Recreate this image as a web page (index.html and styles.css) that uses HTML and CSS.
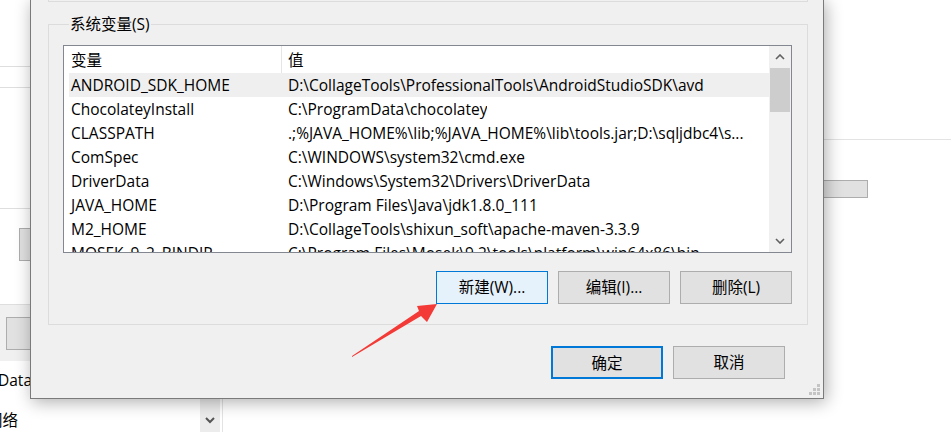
FILE: index.html
```html
<!DOCTYPE html>
<html lang="zh-CN">
<head>
<meta charset="utf-8">
<title>环境变量</title>
<link rel="stylesheet" href="styles.css">
</head>
<body>
<div class="desk">
  <div class="back-left">
    <div class="bl-top"></div>
    <div class="bl-row"></div>
    <div class="bl-mid"></div>
    <div class="bl-sec"><div class="ghost-btn gb1"></div></div>
    <div class="bl-grey"><div class="ghost-btn gb2"></div></div>
    <div class="bl-item bl-data">Data</div>
    <div class="bl-item bl-net">
      <span class="bl-net-text">网络</span>
      <span class="bl-drop">
        <svg width="10" height="7" viewBox="0 0 10 7"><polyline points="1,1 5,5 9,1" fill="none" stroke="#555" stroke-width="2"/></svg>
      </span>
    </div>
  </div>
  <div class="back-right">
    <div class="br-top"></div>
    <div class="ghost-btn gb3"></div>
  </div>

  <div class="dialog">
    <div class="prev-group"></div>
    <div class="group">
      <div class="group-label">系统变量(S)</div>
      <div class="listbox">
        <div class="list-content">
          <div class="list-head">
            <div class="c1 head-c1">变量</div>
            <div class="c2">值</div>
          </div>
          <div class="row selected"><div class="c1">ANDROID_SDK_HOME</div><div class="c2">D:\CollageTools\ProfessionalTools\AndroidStudioSDK\avd</div></div>
          <div class="row"><div class="c1">ChocolateyInstall</div><div class="c2">C:\ProgramData\chocolatey</div></div>
          <div class="row"><div class="c1">CLASSPATH</div><div class="c2">.;%JAVA_HOME%\lib;%JAVA_HOME%\lib\tools.jar;D:\sqljdbc4\s...</div></div>
          <div class="row"><div class="c1">ComSpec</div><div class="c2">C:\WINDOWS\system32\cmd.exe</div></div>
          <div class="row"><div class="c1">DriverData</div><div class="c2">C:\Windows\System32\Drivers\DriverData</div></div>
          <div class="row"><div class="c1">JAVA_HOME</div><div class="c2">D:\Program Files\Java\jdk1.8.0_111</div></div>
          <div class="row"><div class="c1">M2_HOME</div><div class="c2">D:\CollageTools\shixun_soft\apache-maven-3.3.9</div></div>
          <div class="row"><div class="c1">MOSEK_9_2_BINDIR</div><div class="c2">C:\Program Files\Mosek\9.2\tools\platform\win64x86\bin</div></div>
        </div>
        <div class="scrollbar">
          <div class="sb-btn">
            <svg width="10" height="6" viewBox="0 0 10 6"><polyline points="1,5 5,1 9,5" fill="none" stroke="#606060" stroke-width="1.6"/></svg>
          </div>
          <div class="sb-track"><div class="sb-thumb"></div></div>
          <div class="sb-btn">
            <svg width="10" height="6" viewBox="0 0 10 6"><polyline points="1,1 5,5 9,1" fill="none" stroke="#606060" stroke-width="1.6"/></svg>
          </div>
        </div>
      </div>
      <div class="btn-row">
        <button class="btn hover">新建(W)...</button>
        <button class="btn">编辑(I)...</button>
        <button class="btn">删除(L)</button>
      </div>
    </div>
    <div class="btn-row bottom-row">
      <button class="btn default">确定</button>
      <button class="btn">取消</button>
    </div>
    <svg class="grip" width="12" height="12" viewBox="0 0 12 12">
      <rect x="8" y="0" width="3" height="3" fill="#c4c4c4"/>
      <rect x="4" y="4" width="3" height="3" fill="#c4c4c4"/>
      <rect x="8" y="4" width="3" height="3" fill="#c4c4c4"/>
      <rect x="0" y="8" width="3" height="3" fill="#c4c4c4"/>
      <rect x="4" y="8" width="3" height="3" fill="#c4c4c4"/>
      <rect x="8" y="8" width="3" height="3" fill="#c4c4c4"/>
    </svg>
  </div>

  <svg class="arrow" width="951" height="432" viewBox="0 0 951 432">
    <polygon points="352,357 421,316 427,322 437,304 417,306 419,311 352,356" fill="#f33a36"/>
  </svg>
</div>
</body>
</html>
```
FILE: styles.css
```css
* { box-sizing: border-box; }
html, body { margin: 0; padding: 0; background: #fff; }
body {
  font-family: "Open Sans", "Noto Sans CJK SC", sans-serif;
  font-size: 15.5px;
  color: #000;
}
.desk {
  position: relative;
  width: 951px;
  height: 432px;
  overflow: hidden;
  display: flex;
  justify-content: space-between;
  align-items: flex-start;
}

/* window behind */
.back-left {
  width: 223px;
  height: 432px;
  border-right: 1px solid #e3e3e3;
  display: flex;
  flex-direction: column;
}
.back-left > * { flex: none; }
.bl-top { height: 66px; }
.bl-row { height: 21px; border-top: 1px solid #dedede; }
.bl-mid { height: 121px; border-top: 1px solid #dedede; }
.bl-sec { height: 96px; border-top: 1px solid #dedede; padding: 19px 0 0 19px; }
.bl-grey { height: 57px; border-top: 1px solid #dedede; background: #f0f0f0; padding: 12px 0 0 6px; }
.ghost-btn { background: #e1e1e1; border: 1px solid #adadad; }
.gb1 { width: 100px; height: 33px; }
.gb2 { width: 100px; height: 33px; }
.bl-item { white-space: nowrap; }
.bl-data { height: 38px; line-height: 38px; margin-left: -2px; }
.bl-net { height: 34px; display: flex; }
.bl-net-text { width: 200px; margin-left: -13px; padding-top: 10px; line-height: 22px; }
.bl-drop {
  width: 20px;
  margin-left: 13px;
  background: #ececec;
  display: flex;
  justify-content: center;
  padding-top: 18px;
}
.back-right {
  width: 128px;
  display: flex;
  flex-direction: column;
  align-items: flex-end;
}
.br-top { width: 100%; height: 140px; border-bottom: 1px solid #e3e3e3; }
.gb3 { width: 130px; height: 18px; margin-top: 40px; margin-right: 83px; }

/* dialog */
.dialog {
  position: absolute;
  left: 30px;
  top: -1px;
  width: 794px;
  height: 400px;
  background: #f0f0f0;
  border: 1px solid #7a7a7a;
  box-shadow: 2px 3px 16px rgba(0, 0, 0, 0.32);
  padding: 0 15px 19px 17px;
  display: flex;
  flex-direction: column;
}
.prev-group {
  height: 2px;
  border: 1px solid #dcdcdc;
  border-top: none;
}
.group {
  margin-top: 22px;
  border: 1px solid #dcdcdc;
  padding: 0 15px 20px 14px;
}
.group-label {
  width: fit-content;
  margin: -11px 0 0 6px;
  padding: 0 1px;
  background: #f0f0f0;
  line-height: 20px;
  white-space: nowrap;
}
.listbox {
  margin-top: 11px;
  height: 208px;
  border: 1px solid #828790;
  background: #fff;
  display: flex;
}
.list-content {
  flex: 1;
  overflow: hidden;
  padding-left: 5px;
}
.list-head {
  height: 27px;
  display: flex;
}
.list-head .c1, .list-head .c2 { padding-top: 2px; line-height: 25px; }
.row {
  height: 24px;
  line-height: 24px;
  display: flex;
}
.row.selected { background: #efefef; }
.c1 {
  width: 213px;
  flex: none;
  padding-left: 2px;
  white-space: nowrap;
  overflow: hidden;
}
.head-c1 { border-right: 1px solid #e5e5e5; }
.c2 {
  padding-left: 6px;
  white-space: nowrap;
  overflow: hidden;
}
.scrollbar {
  width: 22px;
  flex: none;
  background: #f0f0f0;
  display: flex;
  flex-direction: column;
}
.sb-btn {
  height: 22px;
  display: flex;
  align-items: center;
  justify-content: center;
}
.sb-track { flex: 1; padding: 0 1px; }
.sb-thumb { height: 44px; background: #cdcdcd; }

.btn-row {
  display: flex;
  justify-content: flex-end;
  gap: 10px;
  margin-top: 18px;
}
.bottom-row { margin-top: 21px; margin-right: 23px; }
.btn {
  width: 112px;
  height: 33px;
  background: #e1e1e1;
  border: 1px solid #adadad;
  font: inherit;
  color: #000;
  padding: 0;
  line-height: 31px;
}
.btn.hover { background: #e5f1fb; border-color: #0078d7; }
.btn.default { border: 2px solid #0078d7; }
.grip {
  position: absolute;
  right: 2px;
  bottom: 2px;
}
.arrow {
  position: absolute;
  left: 0;
  top: 0;
  pointer-events: none;
}
```
